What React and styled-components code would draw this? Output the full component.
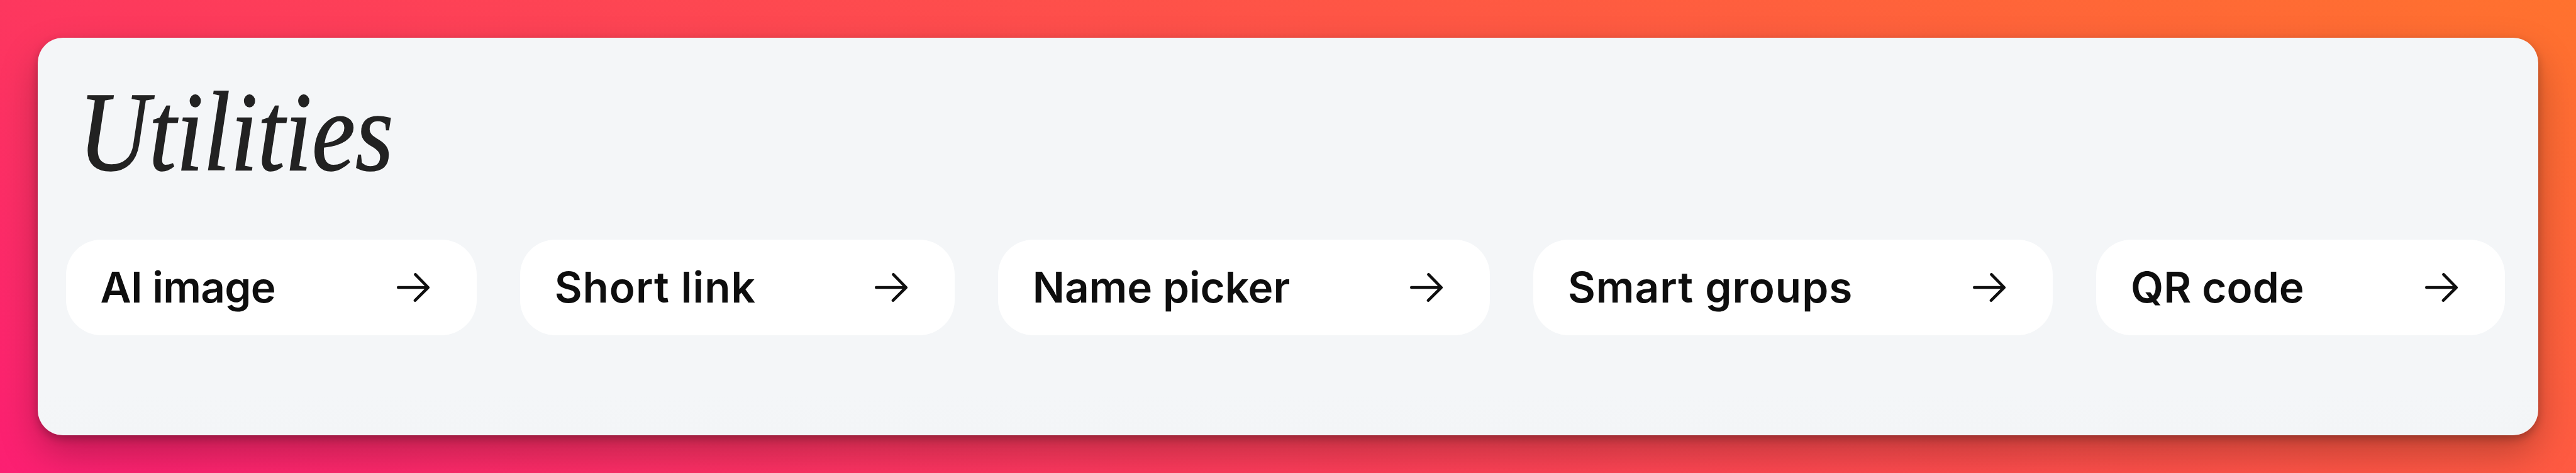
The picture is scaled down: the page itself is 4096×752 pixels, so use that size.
import React from "react";
import styled, { createGlobalStyle } from "styled-components";

const Global = createGlobalStyle`
  *, *::before, *::after { box-sizing: border-box; }
  html, body, #root { height: 100%; }
  body { margin: 0; overflow: hidden; }
`;

const Backdrop = styled.main`
  width: 4096px;
  height: 752px;
  padding: 60px;
  background: linear-gradient(24deg, #fc1f72 0%, #ff722e 100%);
`;

const Panel = styled.section`
  height: 632px;
  padding: 0 53px 0 44.5px;
  border-radius: 40px;
  background: linear-gradient(#f4f6f8 90%, #f3f5f7);
  box-shadow: 0 28px 60px rgba(0, 0, 0, 0.25), 0 6px 14px rgba(0, 0, 0, 0.24);
`;

const Title = styled.h1`
  margin: 0;
  padding: 60px 0 0 23px;
  height: 321px;
  width: max-content;
  font: italic 400 180px/180px "Liberation Serif", serif;
  color: #222;
  -webkit-text-stroke: 1.6px #222;
  transform: scaleX(0.863);
  transform-origin: left;
`;

const Row = styled.nav`
  display: flex;
  justify-content: space-between;
`;

const Pill = styled.a`
  display: flex;
  align-items: center;
  justify-content: space-between;
  width: ${(p) => p.$width}px;
  height: 152px;
  padding: 0 75px 0 55px;
  border-radius: 56px;
  background: #fff;
  color: #0e0e0e;
`;

const Label = styled.span`
  font: 600 67.5px/80px Inter, sans-serif;
  letter-spacing: ${(p) => p.$tracking}px;
  white-space: nowrap;
`;

const Arrow = styled.svg`
  width: 52px;
  height: 46px;
  flex: none;
  fill: none;
  stroke: currentColor;
  stroke-width: 4.6;
  stroke-linecap: round;
  stroke-linejoin: round;
`;

const links = [
  { label: "AI image", width: 653, tracking: -0.7 },
  { label: "Short link", width: 691, tracking: 1 },
  { label: "Name picker", width: 782, tracking: -0.1 },
  { label: "Smart groups", width: 826, tracking: 1 },
  { label: "QR code", width: 650, tracking: 0 },
];

export default function App() {
  return (
    <Backdrop>
      <Global />
      <Panel>
        <Title>Utilities</Title>
        <Row>
          {links.map((l) => (
            <Pill key={l.label} $width={l.width}>
              <Label $tracking={l.tracking}>{l.label}</Label>
              <Arrow viewBox="0 0 52 46">
                <path d="M2.3 23H49M29.5 2.4L49.7 23L29 43.6" />
              </Arrow>
            </Pill>
          ))}
        </Row>
      </Panel>
    </Backdrop>
  );
}
